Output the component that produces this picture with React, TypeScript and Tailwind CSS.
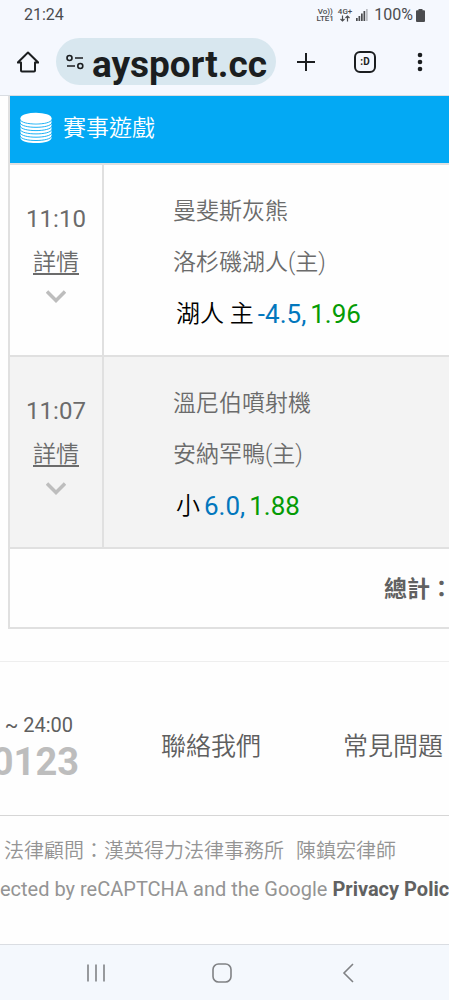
const bets = [
  {
    time: '11:10',
    away: '曼斐斯灰熊',
    home: '洛杉磯湖人(主)',
    pick: '湖人 主',
    line: '-4.5,',
    odds: '1.96',
    row: 'bg-[#fefefe]',
  },
  {
    time: '11:07',
    away: '溫尼伯噴射機',
    home: '安納罕鴨(主)',
    pick: '小',
    line: '6.0,',
    odds: '1.88',
    row: 'bg-[#f3f3f3]',
  },
];

function StatusBar() {
  return (
    <div className="flex h-[30px] items-center justify-between pl-6 pr-6 text-[#4b4c4f]">
      <span className="text-base">21:24</span>
      <div className="flex items-center">
        <div className="mr-1 text-center text-[8px] leading-[7px] font-medium">
          <div>Vo))</div>
          <div>LTE1</div>
        </div>
        <div className="mr-1 flex flex-col items-center text-[8px] leading-[7px] font-medium">
          <div>4G+</div>
          <svg width="10" height="7" viewBox="0 0 10 7" fill="none" stroke="currentColor" strokeWidth="1.2">
            <path d="M2.5 0.5V6M0.5 4l2 2 2-2M7.5 6.5V1M5.5 3l2-2 2 2" />
          </svg>
        </div>
        <svg className="mr-1.5" width="12" height="12" viewBox="0 0 12 12" fill="currentColor">
          <path d="M0 9h1.7v3H0zM2.5 7h1.7v5H2.5zM5 4.5h1.7V12H5zM7.5 2h1.7v10H7.5z" />
          <path d="M10 0h1.7v12H10z" opacity="0.35" />
        </svg>
        <span className="mr-[3px] text-base">100%</span>
        <svg width="9" height="13" viewBox="0 0 9 13" fill="currentColor">
          <path d="M2.5 0h4v1.3H8a1 1 0 0 1 1 1V12a1 1 0 0 1-1 1H1a1 1 0 0 1-1-1V2.3a1 1 0 0 1 1-1h1.5z" />
        </svg>
      </div>
    </div>
  );
}

function Toolbar() {
  return (
    <div className="mt-2 mb-[10px] flex h-[47px] items-center text-[#1b1e20]">
      <button aria-label="Home" className="flex w-14 shrink-0 justify-center">
        <svg width="22" height="22" viewBox="0 0 22 22" fill="none" stroke="currentColor" strokeWidth="2">
          <path d="M0.8 11.5H4V19.5a1 1 0 0 0 1 1h12a1 1 0 0 0 1-1V11.5H21.2L11 1.5z" strokeLinejoin="round" />
        </svg>
      </button>
      <div className="flex h-full min-w-0 flex-1 items-center rounded-full bg-[#d8e7ef] pl-[10px] pr-[9px]">
        <svg className="shrink-0" width="18" height="16" viewBox="0 0 18 16" fill="none" stroke="currentColor" strokeWidth="1.6">
          <circle cx="3.5" cy="4" r="2.5" />
          <path d="M9 4h8M1 12h8" />
          <circle cx="14.3" cy="12" r="2.5" />
        </svg>
        <input
          aria-label="Address"
          defaultValue="aysport.cc"
          className="h-full min-w-0 flex-1 bg-transparent pt-[6px] text-right text-[37px] font-bold outline-none"
        />
      </div>
      <button aria-label="New tab" className="flex w-[60px] shrink-0 justify-center">
        <svg width="20" height="20" viewBox="0 0 20 20" stroke="currentColor" strokeWidth="2">
          <path d="M10 1v18M1 10h18" />
        </svg>
      </button>
      <button aria-label="Tabs" className="flex w-[58px] shrink-0 justify-center">
        <span className="flex size-[22px] items-center justify-center rounded-md border-2 border-current text-[10px] font-bold">
          :D
        </span>
      </button>
      <button aria-label="More" className="flex w-[55px] shrink-0 justify-center pr-1">
        <svg width="6" height="20" viewBox="0 0 6 20" fill="currentColor">
          <circle cx="3" cy="3" r="2.3" />
          <circle cx="3" cy="10" r="2.3" />
          <circle cx="3" cy="17" r="2.3" />
        </svg>
      </button>
    </div>
  );
}

function CoinStack() {
  return (
    <svg className="mb-1" width="32" height="32" viewBox="0 0 32 32">
      <path d="M0.5 6v20c0 3 7 5 15.5 5s15.5-2 15.5-5V6z" fill="#fff" />
      <g fill="none" stroke="#03a9f4" strokeWidth="0.9">
        <path d="M0 7.5c1 3 8 4.5 16 4.5s15-1.5 16-4.5" />
        <path d="M0 10.8c1 3 8 4.5 16 4.5s15-1.5 16-4.5" />
        <path d="M0 14.1c1 3 8 4.5 16 4.5s15-1.5 16-4.5" />
        <path d="M0 17.4c1 3 8 4.5 16 4.5s15-1.5 16-4.5" />
        <path d="M0 20.7c1 3 8 4.5 16 4.5s15-1.5 16-4.5" />
        <path d="M0 24c1 3 8 4.5 16 4.5s15-1.5 16-4.5" />
      </g>
      <ellipse cx="16" cy="6" rx="15.5" ry="5.3" fill="#fff" />
    </svg>
  );
}

function BetTable() {
  return (
    <table className="ml-2 w-[calc(100%-4px)] border-separate border-spacing-0 border-l-2 border-b-2 border-[#e0e0e0]">
      <thead>
        <tr>
          <th colSpan={2} className="h-[69px] border-b-2 border-[#e0e0e0] bg-[#03a9f4] p-0 font-[350] text-white">
            <div className="flex items-center gap-[11px] pl-[10px] text-[23px]">
              <CoinStack />
              賽事遊戲
            </div>
          </th>
        </tr>
      </thead>
      <tbody>
        {bets.map((bet) => (
          <tr key={bet.time} className={bet.row}>
            <td className="h-48 w-[92px] border-b-2 border-[#e0e0e0] p-0 text-center align-top text-[#6b6b6b]">
              <div className="pt-[33px] text-2xl leading-[43px]">{bet.time}</div>
              <a href="#" className="block text-[23px] leading-[43px] font-[350] underline underline-offset-3">詳情</a>
              <svg className="mx-auto mt-[6px]" width="20" height="13" viewBox="0 0 20 13" fill="none" stroke="#bdbdbd" strokeWidth="3.5">
                <path d="M1 1.5l9 9 9-9" />
              </svg>
            </td>
            <td className="border-b-2 border-l-2 border-[#e0e0e0] p-0 pl-[69px] pt-[21px] align-top text-[23px] leading-[51px] text-[#6b6b6b]">
              <div className="font-[350]">{bet.away}</div>
              <div className="font-[350]">{bet.home}</div>
              <div className="flex gap-1 pl-[3px] text-2xl leading-[53px] text-black">
                <span className="font-[350]">{bet.pick}</span>
                <span className="text-[26px] leading-[53px] text-[#0277bd]">{bet.line}</span>
                <span className="text-[26px] leading-[53px] text-[#059b05]">{bet.odds}</span>
              </div>
            </td>
          </tr>
        ))}
        <tr>
          <td colSpan={2} className="h-[78px] p-0 pt-1 text-right text-[23px] font-bold text-[#616161]">總計：</td>
        </tr>
      </tbody>
    </table>
  );
}

function Footer() {
  return (
    <footer className="mt-8 border-t border-[#eeeeee] whitespace-nowrap">
      <div className="flex h-[154px] items-center gap-[82px] border-b border-[#d6d6d6] text-[25px] text-[#5f5f5f]">
        <div className="flex w-[79px] shrink-0 flex-col items-end pt-[18px]">
          <span className="mr-[6px] text-xl leading-7">~ 24:00</span>
          <span className="text-[38px] leading-[46px] font-bold text-[#bdbdbd]">0123</span>
        </div>
        <a href="#" className="pt-4 font-[350]">聯絡我們</a>
        <a href="#" className="pt-4 font-[350]">常見問題</a>
      </div>
      <div className="h-32 pt-4 text-xl leading-[38px] text-[#949494]">
        <p className="flex gap-3 pl-1 font-[350]">
          <span>法律顧問：漢英得力法律事務所</span>
          <span>陳鎮宏律師</span>
        </p>
        <p>
          ected by reCAPTCHA and the Google{' '}
          <a href="#" className="font-bold text-[#616161]">Privacy Policy</a>
        </p>
      </div>
    </footer>
  );
}

function NavBar() {
  return (
    <nav className="grid h-14 grid-cols-3 items-center justify-items-center border-t border-[#dadde2] bg-[#f4f8fd] pl-[33px] pr-[38px] text-[#808285]">
      <button aria-label="Recents">
        <svg width="18" height="18" viewBox="0 0 18 18" stroke="currentColor" strokeWidth="1.6">
          <path d="M1 0.5v17M9 0.5v17M17 0.5v17" />
        </svg>
      </button>
      <button aria-label="Home screen">
        <svg width="20" height="20" viewBox="0 0 20 20" fill="none" stroke="currentColor" strokeWidth="1.6">
          <rect x="1" y="1" width="18" height="18" rx="5.5" />
        </svg>
      </button>
      <button aria-label="Back">
        <svg width="12" height="20" viewBox="0 0 12 20" fill="none" stroke="currentColor" strokeWidth="1.6">
          <path d="M11 1L2 10l9 9" />
        </svg>
      </button>
    </nav>
  );
}

export default function App() {
  return (
    <div className="overflow-hidden bg-[#fefefe] font-['Roboto','Noto_Sans_CJK_TC',sans-serif]">
      <header className="border-b border-[#d9dde2] bg-[#f5f8fe]">
        <StatusBar />
        <Toolbar />
      </header>
      <main>
        <BetTable />
        <Footer />
      </main>
      <NavBar />
    </div>
  );
}
